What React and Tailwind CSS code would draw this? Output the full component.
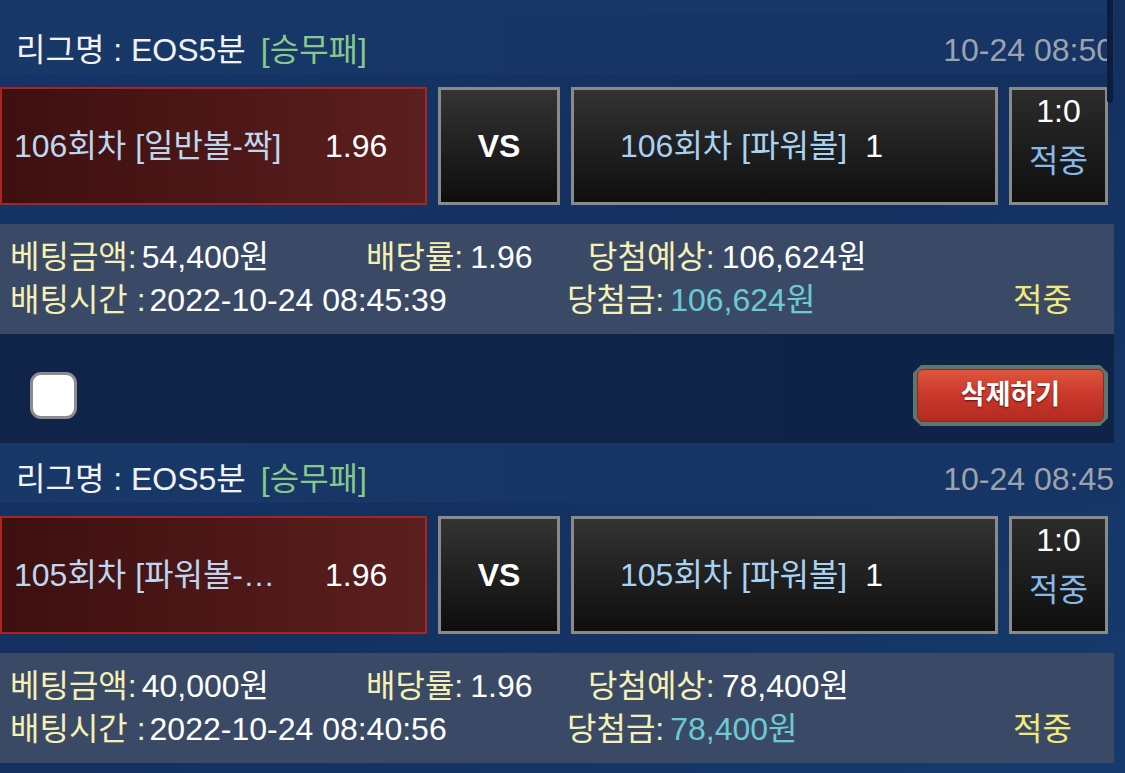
const FONT = { fontFamily: '"Liberation Sans", "Noto Sans CJK KR", sans-serif' };

const bets = [
  {
    time: '10-24 08:50',
    pick: '106회차 [일반볼-짝]',
    odds: '1.96',
    team: '106회차 [파워볼]',
    teamVal: '1',
    score: '1:0',
    amount: '54,400원',
    expected: '106,624원',
    betTime: '2022-10-24 08:45:39',
    win: '106,624원',
  },
  {
    time: '10-24 08:45',
    pick: '105회차 [파워볼-언더]',
    odds: '1.96',
    team: '105회차 [파워볼]',
    teamVal: '1',
    score: '1:0',
    amount: '40,000원',
    expected: '78,400원',
    betTime: '2022-10-24 08:40:56',
    win: '78,400원',
  },
];

function BetCard({ bet, last }) {
  return (
    <div className="w-[1114px]">
      {/* header */}
      <div className="h-[60px] flex items-center justify-between pl-[16px] bg-gradient-to-r from-[#183868] to-[#163466]">
        <div className="text-[32px] text-[#f2f2f2] leading-none pt-[12px]">
          리그명 : EOS5분<span className="ml-[15px] text-[#86c98a]">[승무패]</span>
        </div>
        <div className="text-[32px] text-[#9da3ab] leading-none pt-[12px]">{bet.time}</div>
      </div>

      {/* match row */}
      <div className="mt-[13px] h-[118px] flex gap-[11px] pr-[6px]">
        <div className="w-[427px] flex items-center border-2 border-[#a8261f] bg-gradient-to-r from-[#3e0f0f] to-[#5c1f1f] pl-[12px]">
          <div className="w-[311px]">
            <span className="block max-w-[268px] truncate text-[32px] text-[#bcd8f0]">{bet.pick}</span>
          </div>
          <span className="text-[32px] text-white">{bet.odds}</span>
        </div>
        <div className="w-[122px] flex items-center justify-center border-[3px] border-[#8a8a8a] bg-gradient-to-b from-[#343434] to-[#0e0e0e]">
          <span className="text-[32px] font-bold text-white">VS</span>
        </div>
        <div className="w-[427px] flex items-center border-[3px] border-[#8a8a8a] bg-gradient-to-b from-[#333333] to-[#0f0f0f] pl-[46px]">
          <span className="text-[32px] text-[#a9d2f2]">{bet.team}</span>
          <span className="ml-[18px] text-[32px] text-white">{bet.teamVal}</span>
        </div>
        <div className="flex-1 flex flex-col items-center border-[3px] border-[#8a8a8a] bg-gradient-to-b from-[#2c2c2c] to-[#0f0f0f] pt-[1px]">
          <span className="text-[32px] text-white leading-[40px]">{bet.score}</span>
          <span className="text-[32px] text-[#86b9ea] leading-[40px] mt-[10px]">적중</span>
        </div>
      </div>

      {/* info */}
      <div className="mt-[19px] h-[110px] bg-[#3a4a66] pl-[10px] flex flex-col justify-center text-[32px] leading-[43px]">
        <div className="flex">
          <div className="w-[356px]">
            <span className="text-[#f6f0b4]">베팅금액:</span>
            <span className="ml-[5px] text-white">{bet.amount}</span>
          </div>
          <div className="w-[222px]">
            <span className="text-[#f6f0b4]">배당률:</span>
            <span className="ml-[7px] text-white">1.96</span>
          </div>
          <div>
            <span className="text-[#f6f0b4]">당첨예상:</span>
            <span className="ml-[7px] text-white">{bet.expected}</span>
          </div>
        </div>
        <div className="flex">
          <div className="w-[557px]">
            <span className="text-[#f6f0b4]">배팅시간 :</span>
            <span className="ml-[4px] text-white">{bet.betTime}</span>
          </div>
          <div className="w-[446px]">
            <span className="text-[#f6f0b4]">당첨금:</span>
            <span className="ml-[6px] text-[#6ccad2]">{bet.win}</span>
          </div>
          <div className="text-[#f3ea74]">적중</div>
        </div>
      </div>

      {/* footer */}
      {!last && (
        <div className="h-[109px] bg-gradient-to-r from-[#10244a] to-[#0f2247] flex items-center justify-between pl-[30px] pr-[6px] pt-[14px]">
          <div className="w-[47px] h-[47px] rounded-[11px] border-[3px] border-[#8b8b92] bg-white" />
          <div className="w-[195px] h-[61px] bg-[#5a786f] p-[4px] [clip-path:polygon(8px_0,calc(100%-8px)_0,100%_8px,100%_calc(100%-8px),calc(100%-8px)_100%,8px_100%,0_calc(100%-8px),0_8px)]">
            <div className="h-full rounded-[6px] bg-gradient-to-b from-[#dc553e] via-[#c9372b] to-[#b32a22] border border-[#8e2a22] flex items-center justify-center">
              <span className="text-[27px] font-bold text-white [text-shadow:0_1px_2px_rgba(80,0,0,0.8)]">삭제하기</span>
            </div>
          </div>
        </div>
      )}
    </div>
  );
}

export default function App() {
  return (
    <div className="relative w-[1125px] h-[773px] overflow-hidden bg-gradient-to-br from-[#163468] via-[#13305f] to-[#173a6e]" style={FONT}>
      <div className="h-[14px] w-[1114px] bg-[#1a376b]" />
      {bets.map((b, i) => (
        <BetCard key={i} bet={b} last={i === bets.length - 1} />
      ))}
      <div className="absolute right-[12px] top-0 w-[6px] h-[103px] rounded-b-[3px] bg-[#0d1c3c]" />
    </div>
  );
}
